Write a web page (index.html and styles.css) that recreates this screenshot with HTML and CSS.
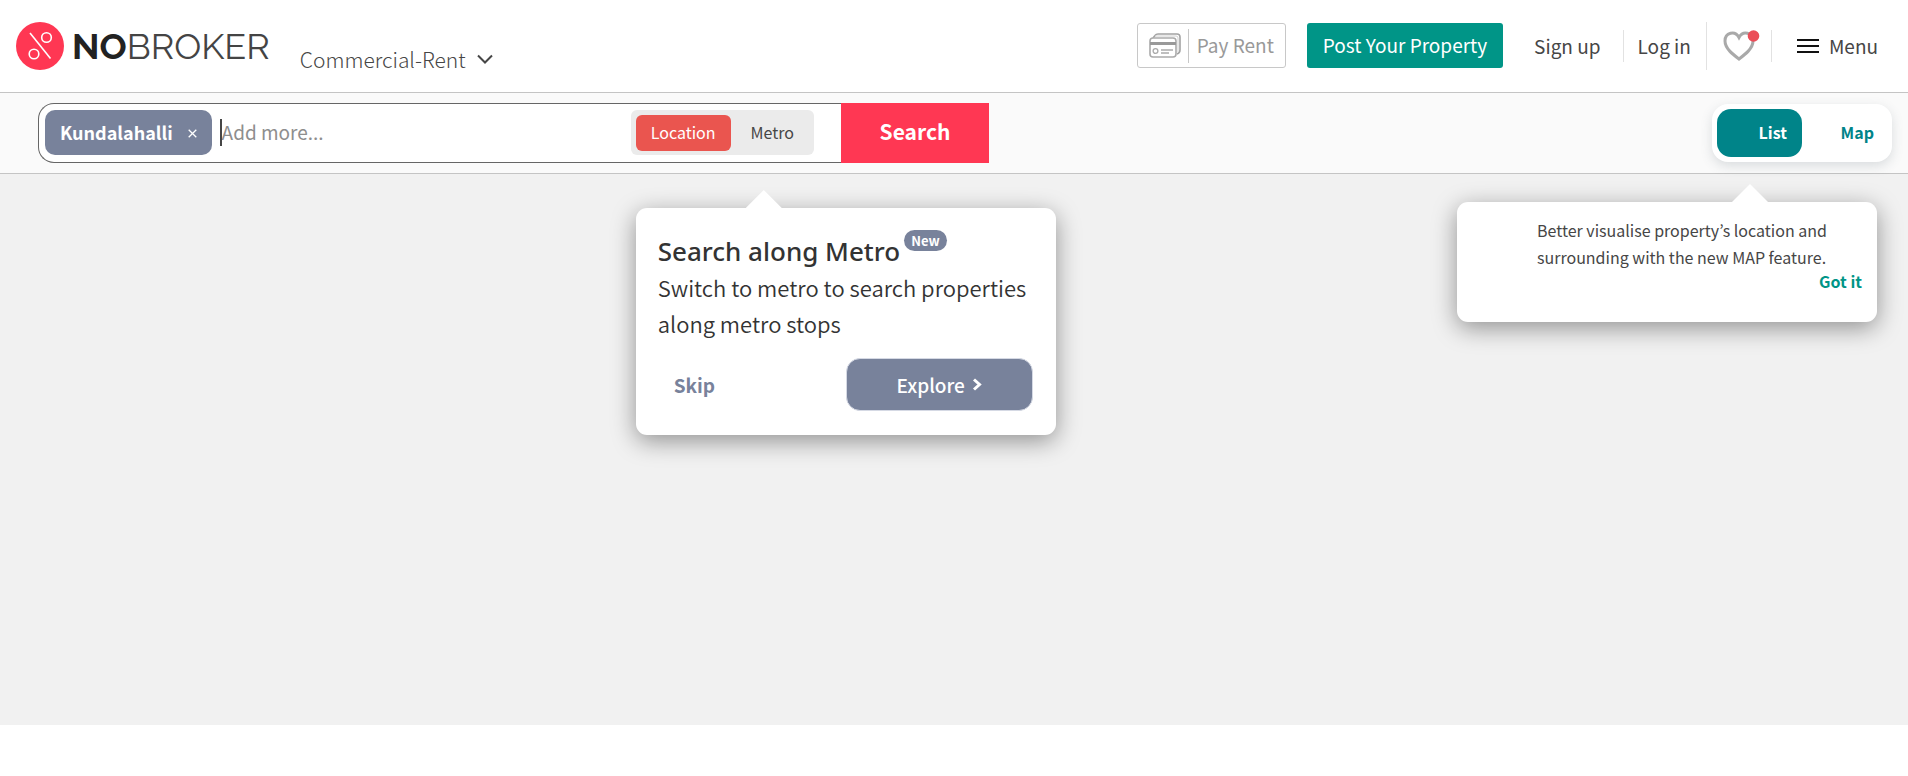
FILE: index.html
```html
<!DOCTYPE html>
<html lang="en">
<head>
<meta charset="utf-8">
<meta name="viewport" content="width=device-width, initial-scale=1">
<title>NoBroker - Commercial Rent</title>
<link rel="stylesheet" href="styles.css">
</head>
<body>
<header class="header">
  <a class="logo" href="#" aria-label="NoBroker home">
    <svg class="logo-mark" viewBox="0 0 48 48" aria-hidden="true">
      <circle cx="24" cy="24" r="24" fill="#ff3753"/>
      <g fill="none" stroke="#fff" stroke-width="1.6">
        <path d="M14 11L34.500 36.500"/><circle cx="30.500" cy="15.500" r="4.800"/><circle cx="18" cy="32" r="4.800"/>
      </g>
    </svg>
    <span class="logo-text"><b>NO</b>BROKER</span>
  </a>
  <button class="category" type="button">Commercial-Rent
    <svg class="category-arrow" viewBox="0 0 16 10" aria-hidden="true"><path d="M1 1.500L8 8.500L15 1.500" fill="none" stroke="#464646" stroke-width="2"/></svg>
  </button>
  <nav class="nav">
    <a class="pay-rent" href="#">
      <svg class="pay-icon" viewBox="0 0 32 25" aria-hidden="true">
        <path d="M4 5L6 2.500Q7 1 9 1H28Q31 1 31 4V17Q31 20 28 21" fill="none" stroke="#a3a3a3" stroke-width="1.600"/>
        <path d="M6 3H27Q29 3 29 5V19" fill="none" stroke="#d0d0d0"/>
        <rect x="1" y="5" width="26" height="19" rx="3" fill="#fff" stroke="#aaa" stroke-width="1.600"/>
        <path d="M1 10.500H27" stroke="#999" stroke-width="3"/>
        <circle cx="6.500" cy="18" r="2.400" fill="none" stroke="#aaa" stroke-width="1.300"/>
        <path d="M12 17H24M12 20H20" stroke="#aaa" stroke-width="1.400"/>
      </svg>
      <span class="pay-label">Pay Rent</span>
    </a>
    <a class="post" href="#">Post Your Property</a>
    <a class="nav-link signup" href="#">Sign up</a>
    <a class="nav-link login" href="#">Log in</a>
    <a class="shortlist" href="#" aria-label="Shortlists">
      <svg class="heart" viewBox="0 0 38 32" aria-hidden="true">
        <path d="M16 29C10 24.500 2 18.500 2 11C2 2.500 12 0 16 7.500C20 0 30 2.500 30 11C30 18.500 22 24.500 16 29Z" fill="none" stroke="#a9a9a9" stroke-width="3"/>
        <circle cx="30.500" cy="6" r="5.800" fill="#eb4d58"/>
      </svg>
    </a>
    <button class="menu" type="button">
      <svg class="burger" viewBox="0 0 22 14" aria-hidden="true"><path d="M0 1H22M0 7H22M0 13H22" stroke="#111" stroke-width="2"/></svg>
      Menu
    </button>
  </nav>
</header>

<section class="searchbar">
  <form class="search" onsubmit="return false">
    <div class="search-box">
      <span class="chip">Kundalahalli
        <button class="chip-close" type="button" aria-label="Remove Kundalahalli"><svg class="close-icon" viewBox="0 0 9 9" aria-hidden="true"><path d="M.7 .7L8.300 8.300M8.300 .7L.7 8.300" stroke="#fff" stroke-width="1.300"/></svg></button>
      </span>
      <span class="caret"></span>
      <input class="search-input" type="text" placeholder="Add more..." aria-label="Add more localities">
      <div class="mode">
        <button class="mode-btn mode-active" type="button">Location</button>
        <button class="mode-btn" type="button">Metro</button>
        <div class="popup metro-popup" role="dialog" aria-labelledby="metro-title">
          <div class="popup-head">
            <h2 class="popup-title" id="metro-title">Search along Metro</h2>
            <span class="badge">New</span>
          </div>
          <p class="popup-text">Switch to metro to search properties along metro stops</p>
          <div class="popup-actions">
            <button class="skip" type="button">Skip</button>
            <button class="explore" type="button">Explore
              <svg class="explore-arrow" viewBox="0 0 10 13" aria-hidden="true"><path d="M2 1.500L7.500 6.500L2 11.500" fill="none" stroke="#fff" stroke-width="3"/></svg>
            </button>
          </div>
        </div>
      </div>
    </div>
    <button class="search-btn" type="submit">Search</button>
  </form>
  <div class="view">
    <button class="view-btn view-active" type="button">List</button>
    <button class="view-btn" type="button">Map</button>
    <div class="popup map-popup" role="dialog" aria-label="Map feature">
      <p class="map-text">Better visualise property’s location and surrounding with the new MAP feature.</p>
      <button class="got-it" type="button">Got it</button>
    </div>
  </div>
</section>
<main class="results"></main>
</body>
</html>
```
FILE: styles.css
```css
* { box-sizing: border-box; }

body {
  margin: 0;
  min-height: 100vh;
  display: flex;
  flex-direction: column;
  background: #fff;
  color: #464646;
  font-family: "Noto Sans CJK KR", "Noto Sans", sans-serif;
  font-size: 19px;
  line-height: 24px;
}

a { color: inherit; text-decoration: none; }
button { border: 0; padding: 0; background: none; color: inherit; font: inherit; cursor: pointer; }
svg { display: block; flex: none; }
h2, p { margin: 0; }

.header {
  display: flex;
  align-items: center;
  height: 93px;
  padding: 0 30px 1px 16px;
  border-bottom: 1px solid #c4c4c4;
}
.logo { display: flex; align-items: center; gap: 8px; }
.logo-mark { width: 48px; height: 48px; }
.logo-text { font-family: Raleway, Lato, sans-serif; font-size: 36px; line-height: 48px; color: #444; }
.logo-text b { color: #222; }
.category {
  display: flex;
  align-items: center;
  gap: 11px;
  margin: 26px 0 0 30px;
  font-size: 21px;
  font-weight: 300;
}
.category-arrow { width: 16px; height: 10px; }

.nav { display: flex; align-items: center; margin-left: auto; white-space: nowrap; }
.pay-rent {
  display: flex;
  align-items: center;
  height: 45px;
  padding: 0 11px;
  border: 1px solid #c8c8c8;
  border-radius: 3px;
  color: #999;
}
.pay-icon { width: 32px; height: 25px; margin-right: 7px; }
.pay-label { padding: 4px 0 6px 8px; border-left: 1px solid #c8c8c8; }
.post {
  margin-left: 21px;
  padding: 0 16px 1px;
  border-radius: 3px;
  background: #009587;
  color: #fff;
  line-height: 44px;
}
.nav-link { line-height: 32px; }
.signup { margin-left: 15px; padding: 0 22px 0 16px; border-right: 1px solid #e2e2e2; }
.login { padding: 0 15px 0 14px; }
.shortlist { display: flex; align-items: center; height: 48px; padding: 0 10px 0 16px; border-left: 1px solid #e2e2e2; }
.heart { width: 38px; height: 32px; }
.menu {
  display: flex;
  align-items: center;
  gap: 10px;
  height: 32px;
  padding-left: 25px;
  border-left: 1px solid #e2e2e2;
}
.burger { width: 22px; height: 14px; }

.searchbar {
  display: flex;
  align-items: flex-start;
  justify-content: space-between;
  height: 81px;
  padding: 10px 16px 0 38px;
  border-bottom: 1px solid #c4c4c4;
  background: #fafafa;
}
.search { display: flex; width: 100%; max-width: 951px; height: 60px; }
.search-box {
  flex: 1;
  display: flex;
  align-items: center;
  min-width: 0;
  padding: 0 27px 1px 6px;
  border: 1px solid #666;
  border-right: 0;
  border-radius: 16px 0 0 16px;
  background: #fff;
}
.chip {
  display: flex;
  align-items: center;
  gap: 15px;
  height: 45px;
  padding: 0 15px 1px;
  border-radius: 10px;
  background: #78829b;
  color: #fff;
  font-size: 18px;
  font-weight: 700;
}
.close-icon { width: 9px; height: 9px; }
.chip-close { padding-top: 3px; }
.caret { width: 2px; height: 27px; margin-left: 8px; background: #464646; }
.search-input {
  flex: 1;
  min-width: 0;
  padding: 0 0 2px;
  border: 0;
  outline: 0;
  background: none;
  color: #464646;
  font: inherit;
}
.search-input::placeholder { color: #8e8e8e; opacity: 1; }
.mode {
  position: relative;
  display: flex;
  height: 45px;
  padding: 5px 5px 4px;
  border-radius: 6px;
  background: #ebebeb;
  font-size: 16px;
}
.mode-btn { padding: 0 15px 2px; border-radius: 6px; }
.mode-btn:nth-child(2) { padding-left: 20px; }
.mode-active { background: #ea554f; color: #fff; }
.search-btn { width: 148px; padding-bottom: 4px; background: #ff3753; color: #fff; font-size: 21px; font-weight: 700; }

.view {
  position: relative;
  display: flex;
  margin-top: 1px;
  padding: 5px;
  border-radius: 16px;
  background: #fff;
  box-shadow: 0 4px 12px rgba(70, 90, 100, .18);
}
.view-btn {
  width: 85px;
  height: 48px;
  padding: 0 15px 2px 0;
  border-radius: 14px;
  color: #008489;
  font-size: 16px;
  font-weight: 600;
  text-align: right;
}
.view-btn:nth-child(2) { padding-right: 13px; }
.view-btn.view-active { background: #008489; color: #fff; }

.popup {
  position: absolute;
  z-index: 2;
  width: 420px;
  border-radius: 11px;
  background: #fff;
  box-shadow: 0 6px 24px rgba(0, 0, 0, .4);
}
.popup::before {
  content: "";
  position: absolute;
  top: -18px;
  width: 36px;
  height: 18px;
  background: #fff;
  clip-path: polygon(50% 0, 100% 100%, 0 100%);
}
.metro-popup { top: 98px; left: 5px; padding: 22px 23px 24px 22px; color: #333; }
.metro-popup::before { left: 110px; }
.popup-head { display: flex; align-items: flex-start; gap: 4px; }
.popup-title {
  padding-top: 3px;
  font-family: "Segoe UI", "Noto Sans", sans-serif;
  font-size: 26px;
  font-weight: 500;
  line-height: 36px;
}
.badge {
  padding: 0 7px;
  border-radius: 11px;
  background: #78829b;
  color: #fff;
  font-size: 13px;
  font-weight: 600;
  line-height: 21px;
}
.popup-text { font-size: 22px; font-weight: 350; line-height: 36px; }
.popup-actions { display: flex; align-items: center; justify-content: space-between; margin-top: 17px; }
.skip { padding: 0 16px; color: #78829b; font-size: 19px; font-weight: 600; }
.explore {
  display: flex;
  align-items: center;
  justify-content: center;
  gap: 7px;
  width: 187px;
  height: 53px;
  border: 1px solid #d5d9e4;
  border-radius: 14px;
  background: #78829b;
  color: #fff;
  font-size: 19px;
  font-weight: 500;
}
.explore-arrow { width: 10px; height: 13px; }

.map-popup {
  top: 98px;
  right: 15px;
  display: flex;
  flex-direction: column;
  padding: 15px 15px 30px 80px;
  font-size: 16px;
}
.map-popup::before { right: 109px; }
.map-text { line-height: 27px; }
.got-it { align-self: flex-end; line-height: 21px; color: #009587; font-weight: 600; }

.results { flex: 1; margin-bottom: 51px; background: #f1f1f1; }
```
